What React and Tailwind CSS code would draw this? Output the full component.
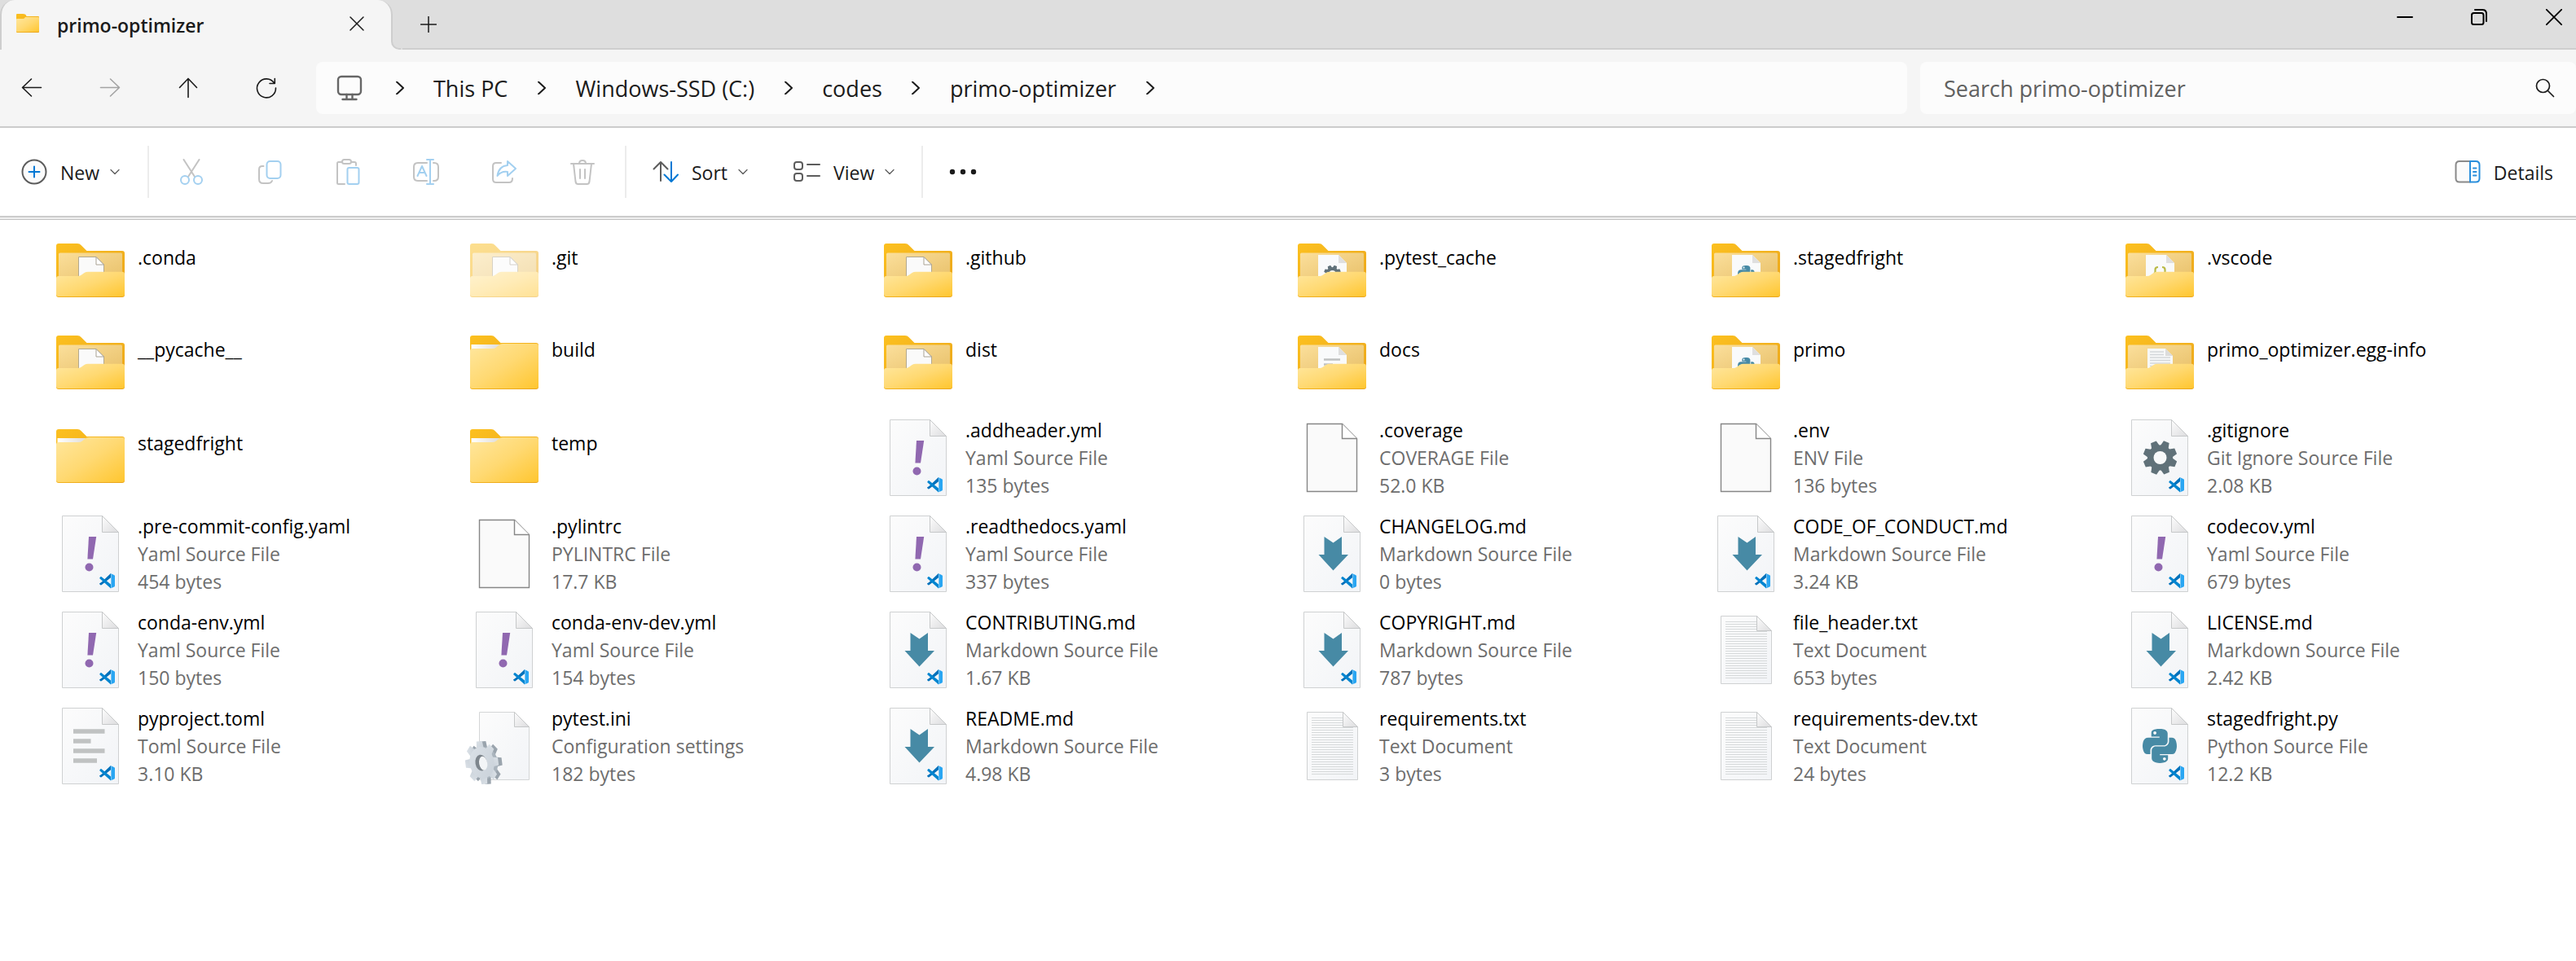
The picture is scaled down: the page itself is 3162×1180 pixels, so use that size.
import React from "react";
import { FaPython } from "react-icons/fa";

/* ---------- file list data ---------- */

const items = [
  { name: ".conda", icon: "folder", inside: "blank" },
  { name: ".git", icon: "folder", inside: "blank", faded: true },
  { name: ".github", icon: "folder", inside: "blank" },
  { name: ".pytest_cache", icon: "folder", inside: "gear" },
  { name: ".stagedfright", icon: "folder", inside: "python" },
  { name: ".vscode", icon: "folder", inside: "json" },
  { name: "__pycache__", icon: "folder", inside: "blank" },
  { name: "build", icon: "folder" },
  { name: "dist", icon: "folder", inside: "blank" },
  { name: "docs", icon: "folder", inside: "lines" },
  { name: "primo", icon: "folder", inside: "python" },
  { name: "primo_optimizer.egg-info", icon: "folder", inside: "text" },
  { name: "stagedfright", icon: "folder" },
  { name: "temp", icon: "folder" },
  { name: ".addheader.yml", type: "Yaml Source File", size: "135 bytes", icon: "yaml" },
  { name: ".coverage", type: "COVERAGE File", size: "52.0 KB", icon: "blank" },
  { name: ".env", type: "ENV File", size: "136 bytes", icon: "blank" },
  { name: ".gitignore", type: "Git Ignore Source File", size: "2.08 KB", icon: "gear" },
  { name: ".pre-commit-config.yaml", type: "Yaml Source File", size: "454 bytes", icon: "yaml" },
  { name: ".pylintrc", type: "PYLINTRC File", size: "17.7 KB", icon: "blank" },
  { name: ".readthedocs.yaml", type: "Yaml Source File", size: "337 bytes", icon: "yaml" },
  { name: "CHANGELOG.md", type: "Markdown Source File", size: "0 bytes", icon: "markdown" },
  { name: "CODE_OF_CONDUCT.md", type: "Markdown Source File", size: "3.24 KB", icon: "markdown" },
  { name: "codecov.yml", type: "Yaml Source File", size: "679 bytes", icon: "yaml" },
  { name: "conda-env.yml", type: "Yaml Source File", size: "150 bytes", icon: "yaml" },
  { name: "conda-env-dev.yml", type: "Yaml Source File", size: "154 bytes", icon: "yaml" },
  { name: "CONTRIBUTING.md", type: "Markdown Source File", size: "1.67 KB", icon: "markdown" },
  { name: "COPYRIGHT.md", type: "Markdown Source File", size: "787 bytes", icon: "markdown" },
  { name: "file_header.txt", type: "Text Document", size: "653 bytes", icon: "text" },
  { name: "LICENSE.md", type: "Markdown Source File", size: "2.42 KB", icon: "markdown" },
  { name: "pyproject.toml", type: "Toml Source File", size: "3.10 KB", icon: "lines" },
  { name: "pytest.ini", type: "Configuration settings", size: "182 bytes", icon: "ini" },
  { name: "README.md", type: "Markdown Source File", size: "4.98 KB", icon: "markdown" },
  { name: "requirements.txt", type: "Text Document", size: "3 bytes", icon: "text" },
  { name: "requirements-dev.txt", type: "Text Document", size: "24 bytes", icon: "text" },
  { name: "stagedfright.py", type: "Python Source File", size: "12.2 KB", icon: "python" },
];

/* ---------- file icons, all on a 96 x 96 grid ---------- */

function Gradients() {
  return (
    <svg width="0" height="0" className="absolute" aria-hidden="true">
      <defs>
        <linearGradient id="front" x1="0" y1="0" x2="1" y2="1">
          <stop offset="0" stopColor="#ffe79f" />
          <stop offset="0.5" stopColor="#ffd972" />
          <stop offset="1" stopColor="#ffc62f" />
        </linearGradient>
        <linearGradient id="back" x1="0" y1="0" x2="1" y2="1">
          <stop offset="0" stopColor="#fcc01f" />
          <stop offset="1" stopColor="#e9a41c" />
        </linearGradient>
        <linearGradient id="inner" x1="0" y1="0" x2="1" y2="1">
          <stop offset="0" stopColor="#fbdf9b" />
          <stop offset="1" stopColor="#e8c069" />
        </linearGradient>
        <linearGradient id="paper" x1="0" y1="0" x2="1" y2="1">
          <stop offset="0" stopColor="#fcfcfc" />
          <stop offset="1" stopColor="#f2f4f7" />
        </linearGradient>
        <linearGradient id="fold" x1="0" y1="0" x2="1" y2="1">
          <stop offset="0" stopColor="#fdfdfd" />
          <stop offset="1" stopColor="#dcdcde" />
        </linearGradient>
        <linearGradient id="strip" x1="0" y1="0" x2="1" y2="0">
          <stop offset="0" stopColor="#ffffff" />
          <stop offset="1" stopColor="#dfdcd8" />
        </linearGradient>
        <linearGradient id="metal" x1="0" y1="0" x2="1" y2="1">
          <stop offset="0" stopColor="#dbe1e7" />
          <stop offset="1" stopColor="#c9d1d9" />
        </linearGradient>
        <clipPath id="pocket">
          <rect x="9" y="24" width="78" height="30" />
        </clipPath>
      </defs>
    </svg>
  );
}

const teeth = [0, 45, 90, 135, 180, 225, 270, 315];

function Gear({ x = 48, y = 48, scale = 1, hole = "#f8f9fa" }) {
  return (
    <g transform={`translate(${x} ${y}) scale(${scale})`} fill="#607179">
      {teeth.map((a) => (
        <path key={a} d="M-5.5 -13 L-3.6 -20.8 H3.6 L5.5 -13 Z" transform={`rotate(${a + 22})`} />
      ))}
      <circle r="15.6" />
      <circle r="8" fill={hole} />
    </g>
  );
}

function VSCodeMark() {
  return (
    <g transform="translate(59 72)">
      <path d="M14 0 L3.2 10.2 L0.9 12 L0 12.6 L0 13 L1.6 14.4 L2.6 14.2 L14 5.2 Z" fill="#0071bb" />
      <path d="M14 18.6 L0.3 6.3 L0.3 5.4 L1.7 4.1 L2.6 4.2 L14 13.4 Z" fill="#0085d0" />
      <path d="M13.6 0 L18.4 2.2 L19 3 V15.6 L18.4 16.4 L13.6 18.6 Q14.4 18 14.4 17 V1.6 Q14.4 0.6 13.6 0 Z" fill="#2aa6f2" />
    </g>
  );
}

function Page({ children }) {
  return (
    <>
      <path d="M13.5 1.5 H62.5 L82.5 21.5 V94.5 H13.5 Z" fill="url(#paper)" stroke="#cfd1d2" />
      <path d="M62.5 1.5 V21.5 H82.5 Z" fill="url(#fold)" stroke="#c6c8c9" />
      {children}
      <VSCodeMark />
    </>
  );
}

function InnerDoc({ kind }) {
  if (kind === "blank") {
    return (
      <>
        <path d="M33.5 29.5 H55 L64.5 39 V56 H33.5 Z" fill="#fafafa" stroke="#b3a98f" />
        <path d="M55 29.5 V39 H64.5 Z" fill="#ffffff" stroke="#a9a294" />
      </>
    );
  }
  if (kind === "text") {
    return (
      <>
        <path d="M33 29 H55 L64 38 V56 H33 Z" fill="#f7f8f9" />
        <path d="M55 29 V38 H64 Z" fill="#dcdcdc" />
        <path d="M36 33 H53 M36 36.5 H53 M36 40 H61 M36 43.5 H61 M36 47 H61 M36 50.5 H61" stroke="#d3d6d9" strokeWidth="1.3" />
      </>
    );
  }
  return (
    <>
      <path d="M31 27 H56 L66 37 V56 H31 Z" fill="#f9fafb" />
      <path d="M56 27 V37 H66 Z" fill="#dfdfdf" />
      {kind === "gear" && <Gear x={48.5} y={50} scale={0.5} />}
      {kind === "python" && <FaPython x="36.5" y="38.5" size={24} color="#478aa5" />}
      {kind === "json" && (
        <path
          d="M46 42 Q42.5 42 42.5 45 V47.5 Q42.5 50 40.5 50 Q42.5 50 42.5 52 V55 M51 42 Q54.5 42 54.5 45 V47.5 Q54.5 50 56.5 50 Q54.5 50 54.5 52 V55"
          fill="none"
          stroke="#b9ba45"
          strokeWidth="2.2"
        />
      )}
      {kind === "lines" && (
        <path d="M38 42.5 H58 M38 48.5 H49" stroke="#bfc1c1" strokeWidth="2.6" />
      )}
    </>
  );
}

function FolderDrawing({ inside, faded }) {
  const backPath = "M6 16 Q6 13 9 13 H32 Q35 13 36.5 15 L43.5 22 H87 Q90 22 90 25 V76 Q90 79 87 79 H9 Q6 79 6 76 Z";
  if (!inside) {
    return (
      <>
        <path d={backPath} fill="url(#back)" />
        <path d="M7.5 24 H43 L36 31 H7.5 Z" fill="url(#strip)" />
        <path d="M6 32 Q6 29 9 29 H33 Q36 29 38 27.5 L41.5 24.5 Q43 23 46 23 H87 Q90 23 90 26 V75 Q90 78 87 78 H9 Q6 78 6 75 Z" fill="url(#front)" />
      </>
    );
  }
  return (
    <g opacity={faded ? 0.5 : 1}>
      <path d={backPath} fill="url(#back)" />
      <rect x="9" y="24.5" width="78" height="34" rx="1.5" fill="url(#inner)" />
      <g clipPath="url(#pocket)">
        <InnerDoc kind={inside} />
      </g>
      <path d="M6 56 Q6 53 9 53 H32 Q35 53 37 51.5 L40.5 49 Q42.5 47.8 45 47.8 H87 Q90 47.8 90 51 V75 Q90 78 87 78 H9 Q6 78 6 75 Z" fill="url(#front)" />
    </g>
  );
}

const textRows = Array.from({ length: 24 }, (_, i) => 13.5 + i * 3);

function FileDrawing({ item }) {
  switch (item.icon) {
    case "folder":
      return <FolderDrawing inside={item.inside} faded={item.faded} />;
    case "yaml":
      return (
        <Page>
          <path d="M46 27 H55.2 L51 54.5 H44.4 Z" fill="#9068b0" />
          <circle cx="46.5" cy="64.5" r="5" fill="#9068b0" />
        </Page>
      );
    case "markdown":
      return (
        <Page>
          <path d="M38.5 27 L49.5 34.5 L60 27 V49 H68 L49.5 68.5 L31.5 49 H38.5 Z" fill="#478aa5" />
        </Page>
      );
    case "gear":
      return (
        <Page>
          <Gear x={48.5} y={48} />
        </Page>
      );
    case "python":
      return (
        <Page>
          <FaPython x="24" y="24" size={48} color="#478aa5" />
        </Page>
      );
    case "lines":
      return (
        <Page>
          <path d="M27 30 H65.5 M27 42 H48.5 M27 54 H65.5 M27 66 H56" stroke="#c0c2c2" strokeWidth="5.6" />
        </Page>
      );
    case "blank":
      return (
        <>
          <path d="M17.5 6.5 H60.5 L78.5 24.5 V89.5 H17.5 Z" fill="#fafafa" stroke="#868686" strokeWidth="1.4" />
          <path d="M60.5 6.5 V24.5 H78.5" fill="#ffffff" stroke="#868686" strokeWidth="1.4" />
        </>
      );
    case "text":
      return (
        <>
          <path d="M17.5 6.5 H61.5 L79.5 24.5 V89.5 H17.5 Z" fill="url(#paper)" stroke="#cfd1d2" />
          {textRows.map((y, i) => (
            <path key={y} d={`M23 ${y} H${i < 4 ? 61 : 74}`} stroke="#d6d9da" strokeWidth="1" />
          ))}
          <path d="M61.5 6.5 V24.5 H79.5 Z" fill="url(#fold)" stroke="#c6c8c9" />
        </>
      );
    case "ini":
      return (
        <>
          <path d="M17.5 6.5 H60.5 L78.5 24.5 V89.5 H17.5 Z" fill="url(#paper)" stroke="#d4d6d7" />
          <path d="M60.5 6.5 V24.5 H78.5 Z" fill="url(#fold)" stroke="#c6c8c9" />
          <g transform="translate(25 68.5) rotate(-10)">
            {teeth.map((a) => (
              <path key={a} d="M-6 -16 L-4.6 -26.5 H4.6 L6 -16 Z" transform={`scale(0.76 1) rotate(${a + 4})`} fill="#9aa4ad" />
            ))}
            <ellipse rx="15" ry="19.5" fill="#aab4bd" />
          </g>
          <g transform="translate(20.5 68.5) rotate(-10)" fill="url(#metal)">
            {teeth.map((a) => (
              <path key={a} d="M-6 -16 L-4.6 -26.5 H4.6 L6 -16 Z" transform={`scale(0.76 1) rotate(${a + 4})`} />
            ))}
            <ellipse rx="15" ry="19.5" />
            <ellipse cx="-1" rx="7" ry="10" fill="#7e868d" />
            <ellipse cx="1.5" cy="1" rx="5" ry="8.5" fill="#f3f5f7" />
          </g>
        </>
      );
    default:
      return null;
  }
}

/* ---------- toolbar icons ---------- */

function Icon({ className = "size-8", box = 32, width = 2, children }) {
  return (
    <svg
      viewBox={`0 0 ${box} ${box}`}
      className={`${className} shrink-0`}
      fill="none"
      stroke="currentColor"
      strokeWidth={width}
      strokeLinecap="round"
      strokeLinejoin="round"
      aria-hidden="true"
    >
      {children}
    </svg>
  );
}

const BLUE = "#a3d0f0";
const GREY = "#c3c3c3";

function Caret() {
  return (
    <Icon className="size-3" box={12} width={1.3}>
      <path d="M1 3.5 L6 8.5 L11 3.5" />
    </Icon>
  );
}

function Separator() {
  return <div className="h-16 w-[2px] shrink-0 bg-[#ececec]" />;
}

const editTools = [
  {
    label: "Cut",
    art: (
      <>
        <path d="M6.5 1 L20 22 M25.5 1 L12 22" stroke={GREY} />
        <circle cx="8" cy="26" r="5" stroke={BLUE} />
        <circle cx="24" cy="26" r="5" stroke={BLUE} />
      </>
    ),
  },
  {
    label: "Copy",
    art: (
      <>
        <path d="M8.5 9 H7 Q3 9 3 13 V25 Q3 30 8 30 H14 Q18 30 19 27" stroke={GREY} />
        <rect x="12.5" y="3" width="17" height="21" rx="4" stroke={BLUE} />
      </>
    ),
  },
  {
    label: "Paste",
    art: (
      <>
        <path d="M9 4 H4.5 Q3 4 3 5.5 V29.5 Q3 31 4.5 31 H12 M20 4 H24 Q26 4 26 6 V8" stroke={GREY} />
        <rect x="9" y="1" width="11" height="5" rx="2.5" stroke={GREY} />
        <rect x="15.5" y="11" width="14" height="20" rx="2" stroke={BLUE} />
      </>
    ),
  },
  {
    label: "Rename",
    art: (
      <>
        <path d="M17 5 H6 Q1 5 1 10 V22 Q1 27 6 27 H17 M25 5 H26 Q31 5 31 10 V22 Q31 27 26 27 H25" stroke={GREY} />
        <path d="M17 1 H25 M17 31 H25 M21 1 V31 M5.5 21 L11 9 L16.5 21 M7.5 17 H14.5" stroke={BLUE} />
      </>
    ),
  },
  {
    label: "Share",
    art: (
      <>
        <path d="M12 5 H6 Q2 5 2 9 V25 Q2 29 6 29 H22 Q26 29 26 24" stroke={GREY} />
        <path d="M20 3 L30 12 L20 21 V16 Q12 15 7.5 21 Q9 9 20 8 Z" stroke={BLUE} />
      </>
    ),
  },
  {
    label: "Delete",
    art: (
      <path
        d="M2 6 H30 M12 6 Q12 2 16 2 Q20 2 20 6 M5 6 L7.5 28 Q8 31 10.5 31 H21.5 Q24 31 24.5 28 L27 6 M13 13 V24 M19 13 V24"
        stroke={GREY}
      />
    ),
  },
];

const crumbs = ["This PC", "Windows-SSD (C:)", "codes", "primo-optimizer"];

/* ---------- window parts ---------- */

function TitleBar() {
  return (
    <header className="flex h-[61px] bg-[#dedede]">
      <div className="relative flex w-[482px] shrink-0 items-center rounded-t-[18px] border-x-2 border-[#cecece] bg-[#f5f5f5] pb-1 pl-[18px] pr-[22px]">
        <svg viewBox="0 0 28 24" className="h-6 w-7" aria-hidden="true">
          <path d="M0 1 Q0 0 1 0 H8 Q12 0 12.5 3 H27 Q28 3 28 4 V22 Q28 23 27 23 H1 Q0 23 0 22 Z" fill="url(#back)" />
          <path d="M0 7 Q0 6 1 6 H8.5 Q10 6 11 4 H27 Q28 4 28 5 V21 Q28 22 27 22 H1 Q0 22 0 21 Z" fill="url(#front)" />
        </svg>
        <span className="ml-[22px] grow pt-1 text-[23px] font-semibold leading-8 text-[#1b1b1b]">primo-optimizer</span>
        <button aria-label="Close tab" className="flex size-10 items-center justify-center">
          <Icon className="size-5" box={20} width={1.5}>
            <path d="M2 2 L18 18 M18 2 L2 18" />
          </Icon>
        </button>
        <span className="absolute -right-3 bottom-0 size-3 bg-[#f5f5f5]">
          <span className="block size-3 rounded-bl-[10px] border-b-2 border-l-2 border-[#cecece] bg-[#dedede]" />
        </span>
      </div>
      <div className="ml-3 flex grow items-start justify-between border-b-2 border-[#cecece]">
        <button aria-label="New tab" className="flex h-[60px] w-16 items-center justify-center">
          <Icon className="size-5" box={20} width={1.5}>
            <path d="M10 0.5 V19.5 M0.5 10 H19.5" />
          </Icon>
        </button>
        <div className="flex text-black">
          <button aria-label="Minimize" className="flex h-[42px] w-[92px] items-center justify-center">
            <Icon className="size-5" box={20}>
              <path d="M1 10 H19" />
            </Icon>
          </button>
          <button aria-label="Restore" className="flex h-[42px] w-[90px] items-center justify-center">
            <Icon className="size-5" box={20}>
              <rect x="1" y="5" width="14.5" height="14" rx="2.5" />
              <path d="M5 1 H14 Q19 1 19 6 V15" />
            </Icon>
          </button>
          <button aria-label="Close" className="flex h-[42px] w-[74px] items-center justify-center pl-5">
            <Icon className="size-5" box={20} width={1.8}>
              <path d="M0.5 0.5 L19.5 19.5 M19.5 0.5 L0.5 19.5" />
            </Icon>
          </button>
        </div>
      </div>
    </header>
  );
}

function NavButton({ label, disabled, children }) {
  return (
    <button
      aria-label={label}
      disabled={disabled}
      className={`flex h-16 w-24 items-center justify-center ${disabled ? "text-[#a3a3a3]" : "text-[#1b1b1b]"}`}
    >
      <Icon className="size-7" box={28} width={1.6}>
        {children}
      </Icon>
    </button>
  );
}

function AddressRow() {
  return (
    <div className="flex h-24 items-center border-b-2 border-[#cccccc] bg-[#f5f5f5]">
      <nav className="-ml-[9px] flex shrink-0" aria-label="History">
        <NavButton label="Back">
          <path d="M25.5 13.5 H2.5 M13.5 3 L2.5 13.5 L13.5 24" />
        </NavButton>
        <NavButton label="Forward" disabled>
          <path d="M2.5 13.5 H25.5 M14.5 3 L25.5 13.5 L14.5 24" />
        </NavButton>
        <NavButton label="Up">
          <path d="M14 25.5 V2.5 M3.5 13.5 L14 2.5 L24.5 13.5" />
        </NavButton>
        <NavButton label="Refresh">
          <path d="M23.6 8 A11.5 11.5 0 1 0 25.5 14 M24.3 2.5 V8.5 H18" />
        </NavButton>
      </nav>
      <nav className="ml-[13px] flex h-16 min-w-0 grow items-center rounded-lg bg-[#fcfcfc] pl-[25px]" aria-label="Address">
        <Icon className="mr-1 size-8 text-[#666666]" width={2.4}>
          <rect x="2" y="2" width="28" height="22" rx="4" />
          <path d="M12.5 24 V29 M19.5 24 V29 M7.5 30 H24.5" />
        </Icon>
        {crumbs.map((c) => (
          <React.Fragment key={c}>
            <Chevron />
            <a href="#" className="whitespace-nowrap pt-0.5 text-[27px] leading-9 text-[#1b1b1b]">
              {c}
            </a>
          </React.Fragment>
        ))}
        <Chevron />
      </nav>
      <label className="ml-4 flex h-16 w-[805px] shrink-0 items-center rounded-lg bg-[#fcfcfc] pl-[29px] pr-[26px]">
        <input
          type="text"
          aria-label="Search primo-optimizer"
          placeholder="Search primo-optimizer"
          className="min-w-0 grow bg-transparent pt-0.5 text-[27px] leading-9 outline-none placeholder:text-[#606060]"
        />
        <Icon className="size-6" box={24} width={1.7}>
          <circle cx="9.5" cy="9.5" r="8" />
          <path d="M15.5 15.5 L22.5 22.5" />
        </Icon>
      </label>
    </div>
  );
}

function Chevron() {
  return (
    <span className="flex w-[83px] shrink-0 justify-center text-[#1b1b1b]">
      <Icon className="size-4" box={16} width={2}>
        <path d="M4 0.5 L12 8 L4 15.5" />
      </Icon>
    </span>
  );
}

function CommandBar() {
  const text = "pt-0.5 text-[23px] leading-8 text-[#1b1b1b]";
  return (
    <div className="flex h-[108px] items-center">
      <button className="flex h-16 w-[181px] shrink-0 items-center pl-[26px] text-[#5c5c5c]">
        <Icon className="size-8">
          <circle cx="16" cy="16" r="14.5" fill="#fbfbfb" />
          <path d="M16 9.5 V22.5 M9.5 16 H22.5" stroke="#0078d4" />
        </Icon>
        <span className={`ml-4 mr-[13px] ${text}`}>New</span>
        <Caret />
      </button>
      <Separator />
      <div className="flex shrink-0 px-1">
        {editTools.map((t) => (
          <button key={t.label} aria-label={t.label} disabled className="flex h-16 w-24 items-center justify-center">
            <Icon>{t.art}</Icon>
          </button>
        ))}
      </div>
      <Separator />
      <button className="ml-8 flex h-16 w-[172px] shrink-0 items-center text-[#5c5c5c]">
        <Icon>
          <path d="M10 27 V4 M1.5 12.5 L10 4 L18.5 12.5" />
          <path d="M23 4 V28 M14.5 19.5 L23 28 L31 19.5" stroke="#0078d4" />
        </Icon>
        <span className={`ml-4 mr-[13px] ${text}`}>Sort</span>
        <Caret />
      </button>
      <button className="flex h-16 w-[158px] shrink-0 items-center text-[#5c5c5c]">
        <Icon className="size-9" box={36}>
          <rect x="2" y="6" width="10" height="9" rx="3" />
          <rect x="2" y="20" width="10" height="9" rx="3" />
          <path d="M18 9 H33 M18 23 H33" />
        </Icon>
        <span className={`ml-[14px] mr-[13px] ${text}`}>View</span>
        <Caret />
      </button>
      <Separator />
      <button aria-label="More" className="ml-8 flex h-16 items-center">
        <svg viewBox="0 0 34 8" className="h-2 w-[34px] fill-[#1b1b1b]" aria-hidden="true">
          <circle cx="4" cy="4" r="3.2" />
          <circle cx="17" cy="4" r="3.2" />
          <circle cx="30" cy="4" r="3.2" />
        </svg>
      </button>
      <button className="ml-auto mr-7 flex h-16 items-center text-[#8a8a8a]">
        <Icon className="size-8">
          <path d="M19 3 H6 Q1.5 3 1.5 7.5 V24 Q1.5 28.5 6 28.5 H19" fill="#fbfbfb" />
          <path d="M19 3 H26 Q30.5 3 30.5 7.5 V24 Q30.5 28.5 26 28.5 H19 Z" stroke="#2b8fdc" fill="#ffffff" />
          <path d="M23 11.5 H26.5 M23 16 H26.5 M23 20.5 H26.5" stroke="#2b8fdc" />
        </Icon>
        <span className={`ml-4 ${text}`}>Details</span>
      </button>
    </div>
  );
}

function FileItem({ item }) {
  const isFolder = item.icon === "folder";
  return (
    <li>
      <button className="flex h-full w-full items-center gap-[10px] text-left text-[23px] leading-[34px]">
        <svg viewBox="0 0 96 96" className="size-24 shrink-0" aria-hidden="true">
          <FileDrawing item={item} />
        </svg>
        <span className={`flex flex-col whitespace-nowrap ${isFolder ? "pb-9" : ""}`}>
          <span className="text-black">{item.name}</span>
          {!isFolder && <span className="text-[#6d6d6d]">{item.type}</span>}
          {!isFolder && <span className="text-[#6d6d6d]">{item.size}</span>}
        </span>
      </button>
    </li>
  );
}

export default function App() {
  return (
    <div className="min-h-screen bg-white font-['Open_Sans','Noto_Sans',sans-serif] text-[#1b1b1b]">
      <Gradients />
      <TitleBar />
      <AddressRow />
      <CommandBar />
      <div className="h-[5px] border-b border-t-2 border-b-[#c0c0c0] border-t-[#cccccc] bg-[#f0f0f0]" />
      <main>
        <ul className="grid auto-rows-[118px] grid-cols-[repeat(auto-fill,508px)] grid-rows-[112px_113px] pl-[63px] pt-2">
          {items.map((item) => (
            <FileItem key={item.name} item={item} />
          ))}
        </ul>
      </main>
    </div>
  );
}
